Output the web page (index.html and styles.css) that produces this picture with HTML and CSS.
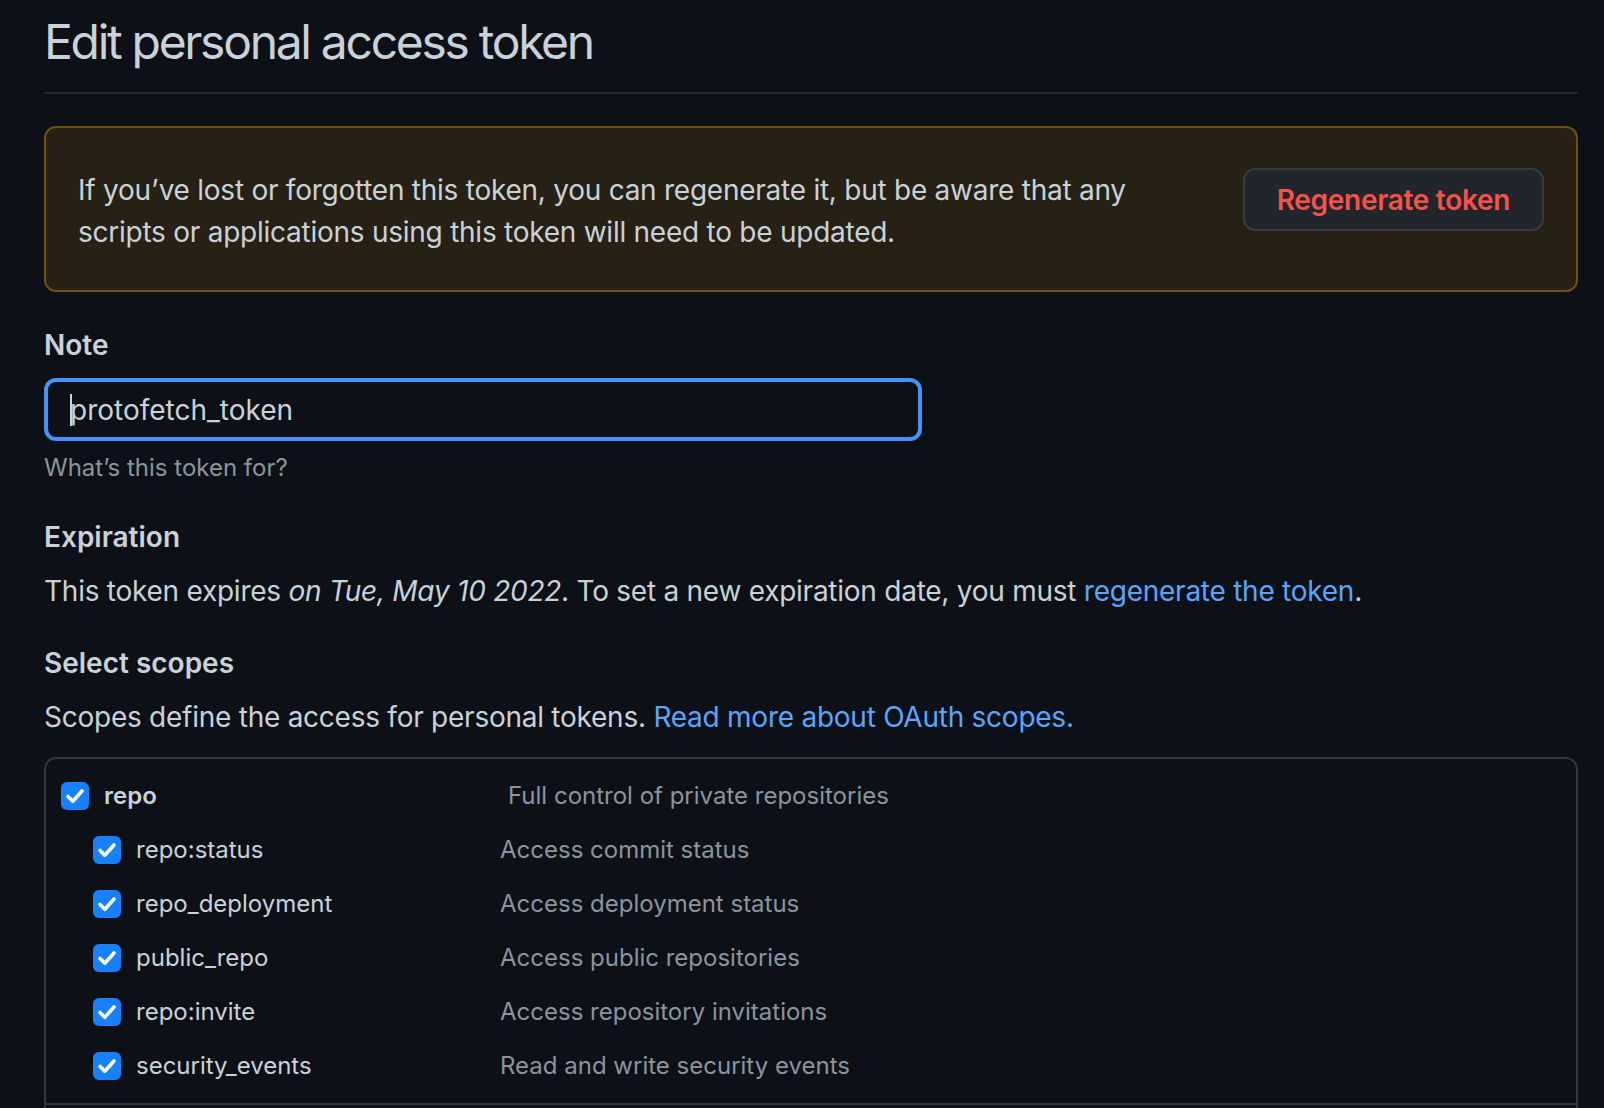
FILE: index.html
```html
<!DOCTYPE html>
<html lang="en">
<head>
<meta charset="utf-8">
<title>Edit personal access token</title>
<link rel="stylesheet" href="styles.css">
</head>
<body>
<div class="page">
  <div class="subhead">
    <h1 class="subhead-heading">Edit personal access token</h1>
  </div>

  <div class="flash">
    <p class="flash-text">If you’ve lost or forgotten this token, you can regenerate it, but be aware that any scripts or applications using this token will need to be updated.</p>
    <button class="btn btn-danger" type="button">Regenerate token</button>
  </div>

  <div class="form-group note-group">
    <div class="form-label">Note</div>
    <div class="form-control"><span class="caret"></span>protofetch_token</div>
    <p class="note">What’s this token for?</p>
  </div>

  <div class="form-group expiration-group">
    <div class="form-label">Expiration</div>
    <p class="form-text">This token expires <em>on Tue, May 10 2022</em>. To set a new expiration date, you must <a href="#" class="link">regenerate the token</a>.</p>
  </div>

  <div class="form-group scopes-group">
    <div class="form-label">Select scopes</div>
    <p class="form-text">Scopes define the access for personal tokens. <a href="#" class="link">Read more about OAuth scopes.</a></p>
  </div>

  <div class="scopes">
    <div class="scope-group">
      <div class="scope-row scope-parent">
        <div class="scope-name">
          <svg class="checkbox" viewBox="0 0 28 28" width="28" height="28"><rect x="0" y="0" width="28" height="28" rx="6" fill="#1681fa"/><path d="M7 14.5 L11.8 19.3 L21 9" fill="none" stroke="#fff" stroke-width="3.6" stroke-linecap="round" stroke-linejoin="round"/></svg>
          <span class="scope-label strong">repo</span>
        </div>
        <div class="scope-desc">Full control of private repositories</div>
      </div>
      <div class="scope-row scope-child">
        <div class="scope-name">
          <svg class="checkbox" viewBox="0 0 28 28" width="28" height="28"><rect x="0" y="0" width="28" height="28" rx="6" fill="#1681fa"/><path d="M7 14.5 L11.8 19.3 L21 9" fill="none" stroke="#fff" stroke-width="3.6" stroke-linecap="round" stroke-linejoin="round"/></svg>
          <span class="scope-label">repo:status</span>
        </div>
        <div class="scope-desc">Access commit status</div>
      </div>
      <div class="scope-row scope-child">
        <div class="scope-name">
          <svg class="checkbox" viewBox="0 0 28 28" width="28" height="28"><rect x="0" y="0" width="28" height="28" rx="6" fill="#1681fa"/><path d="M7 14.5 L11.8 19.3 L21 9" fill="none" stroke="#fff" stroke-width="3.6" stroke-linecap="round" stroke-linejoin="round"/></svg>
          <span class="scope-label">repo_deployment</span>
        </div>
        <div class="scope-desc">Access deployment status</div>
      </div>
      <div class="scope-row scope-child">
        <div class="scope-name">
          <svg class="checkbox" viewBox="0 0 28 28" width="28" height="28"><rect x="0" y="0" width="28" height="28" rx="6" fill="#1681fa"/><path d="M7 14.5 L11.8 19.3 L21 9" fill="none" stroke="#fff" stroke-width="3.6" stroke-linecap="round" stroke-linejoin="round"/></svg>
          <span class="scope-label">public_repo</span>
        </div>
        <div class="scope-desc">Access public repositories</div>
      </div>
      <div class="scope-row scope-child">
        <div class="scope-name">
          <svg class="checkbox" viewBox="0 0 28 28" width="28" height="28"><rect x="0" y="0" width="28" height="28" rx="6" fill="#1681fa"/><path d="M7 14.5 L11.8 19.3 L21 9" fill="none" stroke="#fff" stroke-width="3.6" stroke-linecap="round" stroke-linejoin="round"/></svg>
          <span class="scope-label">repo:invite</span>
        </div>
        <div class="scope-desc">Access repository invitations</div>
      </div>
      <div class="scope-row scope-child">
        <div class="scope-name">
          <svg class="checkbox" viewBox="0 0 28 28" width="28" height="28"><rect x="0" y="0" width="28" height="28" rx="6" fill="#1681fa"/><path d="M7 14.5 L11.8 19.3 L21 9" fill="none" stroke="#fff" stroke-width="3.6" stroke-linecap="round" stroke-linejoin="round"/></svg>
          <span class="scope-label">security_events</span>
        </div>
        <div class="scope-desc">Read and write security events</div>
      </div>
    </div>
    <div class="scope-group scope-group-next"></div>
  </div>
</div>
</body>
</html>
```

FILE: styles.css
```css
html, body {
  margin: 0;
  padding: 0;
  background: #0d1117;
}

body {
  font-family: Inter, "Noto Sans", sans-serif;
  color: #c9d1d9;
  font-size: 28px;
  line-height: 42px;
  letter-spacing: -0.25px;
}

.page {
  height: 100vh;
  overflow: hidden;
  padding: 0 26px 0 44px;
}

.subhead {
  padding-top: 12px;
  padding-bottom: 20px;
  border-bottom: 2px solid #21262d;
  margin-bottom: 32px;
}

.subhead-heading {
  margin: 0;
  font-size: 48px;
  line-height: 60px;
  font-weight: 400;
  letter-spacing: -2.3px;
  color: #c9d1d9;
}

.flash {
  display: flex;
  align-items: flex-start;
  gap: 48px;
  padding: 41px 32px 37px;
  border: 2px solid #6d5115;
  border-radius: 12px;
  background: #272115;
}

.flash-text {
  margin: 0;
  flex: 1;
}

.btn {
  flex: none;
  height: 63px;
  margin-top: -1px;
  padding: 0 32px;
  border: 2px solid #363b42;
  border-radius: 12px;
  background: #21262d;
  font-family: inherit;
  font-size: 28px;
  font-weight: 600;
  letter-spacing: -0.3px;
  color: #f85149;
}

.form-group {
  margin-top: 30px;
}

.note-group {
  margin-top: 32px;
}

.form-label {
  font-weight: 600;
  letter-spacing: 0;
  margin-bottom: 12px;
}

.form-control {
  box-sizing: border-box;
  width: 878px;
  height: 63px;
  padding: 0 22px;
  border: 4px solid #4493f8;
  border-radius: 12px;
  display: flex;
  align-items: center;
  color: #c9d1d9;
  letter-spacing: 0;
}

.caret {
  display: inline-block;
  width: 2px;
  height: 32px;
  background: #c9d1d9;
  margin-right: -2px;
}

.note {
  margin: 9px 0 0;
  font-size: 24px;
  line-height: 36px;
  letter-spacing: 0;
  color: #8b949e;
}

.form-text {
  margin: 0;
}

.link {
  color: #58a6ff;
  text-decoration: none;
}

.scopes {
  margin-top: 19px;
  border: 2px solid #30363d;
  border-radius: 12px;
}

.scope-group {
  padding: 10px 15px;
}

.scope-group + .scope-group {
  border-top: 2px solid #30363d;
}

.scope-group-next {
  min-height: 60px;
}

.scope-row {
  display: grid;
  height: 54px;
  align-items: center;
  font-size: 24px;
  line-height: 36px;
  letter-spacing: 0;
}

.scope-parent {
  grid-template-columns: 447px 1fr;
}

.scope-child {
  padding-left: 32px;
  grid-template-columns: 407px 1fr;
}

.scope-name {
  display: flex;
  align-items: center;
  gap: 15px;
}

.checkbox {
  flex: none;
  display: block;
}

.strong {
  font-weight: 600;
}

.scope-desc {
  color: #8b949e;
}
```
